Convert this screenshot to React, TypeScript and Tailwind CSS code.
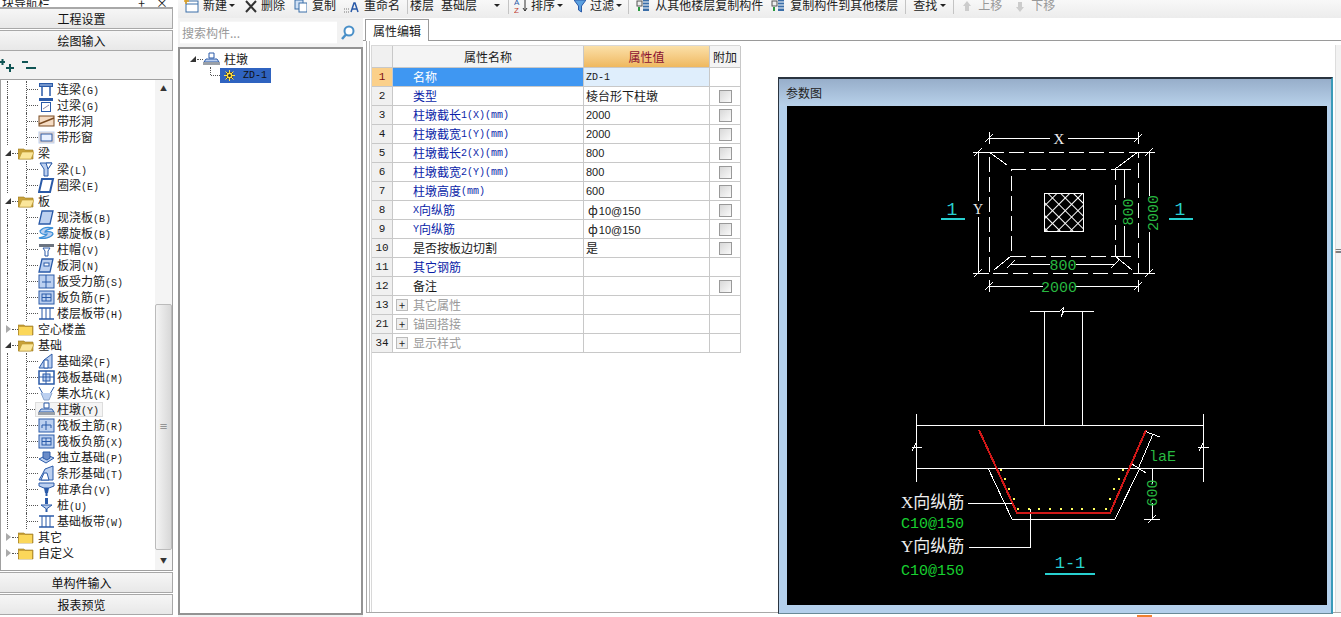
import React from "react";

const CJK = '"Noto Sans CJK SC", sans-serif';

// latin runs are narrower than a plain 12px font, like the bitmap font in the app
const Txt = ({ s }: { s: string }) => {
  const parts = s.split(/([\x20-\x7e]+)/).filter(Boolean);
  return (
    <>
      {parts.map((p, i) =>
        /^[\x20-\x7e]+$/.test(p) ? (
          <span key={i} className="font-['Liberation_Mono',monospace] text-[10px] whitespace-pre">{p}</span>
        ) : (
          <span key={i}>{p}</span>
        )
      )}
    </>
  );
};

const B = "#2a5aa8";
const L = "#bcd0f0";
const G = "#6c7480";

const icons: Record<string, React.ReactNode> = {
  lianliang: <><rect x="1" y="2" width="14" height="4" fill={B} /><path d="M4 6v9M12 6v9" stroke={B} strokeWidth="1.500" /><path d="M2 4h12" stroke={L} /></>,
  guoliang: <><rect x="1" y="1" width="14" height="3" fill={B} /><rect x="3.500" y="5.500" width="9" height="9" fill="#fff" stroke={B} /><path d="M5 12l6-4" stroke="#88a" /></>,
  dongdai: <><rect x="1" y="3" width="15" height="10" fill="#f5dcc4" stroke="#7a4a20" /><path d="M1 11L16 5" stroke="#7a4a20" strokeWidth="1.500" /></>,
  chuang: <><rect x="1" y="3" width="15" height="11" fill="#f1d9c6" stroke={L} /><rect x="3" y="5" width="11" height="7" fill="#e8f0ff" stroke={B} /></>,
  liang: <><path d="M2 2h12l-4 6v7H6V8z" fill={L} stroke={B} /><path d="M8 2l6 0-4 6z" fill="#fff" stroke={B} /></>,
  quan: <><path d="M4 2h11l-3 13H1z" fill="#fff" stroke={B} strokeWidth="2" /></>,
  ban: <><path d="M4 2h11l-3 13H1z" fill={L} stroke={B} strokeWidth="1.300" /></>,
  luoxuan: <><path d="M2 6c3-4 9-4 13-3-4 1-8 2-8 4 4-1 8 0 8 2-2 4-9 5-14 4 4-1 8-2 8-4-3 1-7 0-7-3z" fill={L} stroke="#3b8fd8" strokeWidth="1.300" /></>,
  zhumao: <><rect x="1" y="3" width="15" height="3" fill={G} /><path d="M5 7h7l-2 3v5H7v-5z" fill="#fff" stroke={B} /></>,
  bandong: <><path d="M4 2h11l-3 13H1z" fill={L} stroke={B} strokeWidth="1.300" /><rect x="6" y="6" width="5" height="3" fill="#fff" stroke={B} /></>,
  shouli: <><rect x="1" y="2" width="15" height="13" fill={L} stroke={B} /><path d="M8 2v13M4 9h9" stroke={B} /></>,
  fujin: <><rect x="1" y="2" width="15" height="13" fill={L} stroke={B} /><rect x="4" y="5" width="9" height="7" fill="none" stroke={B} /><path d="M8 5v7M4 8.500h9" stroke={B} /></>,
  daiban: <><path d="M1 3h15M1 14h15" stroke={B} strokeWidth="1.500" /><path d="M4 3v11M8 3v11M12 3v11" stroke={B} /></>,
  jichuliang: <><path d="M1 15l5-8 8-6v14z" fill={L} stroke={B} /><path d="M6 15V7h4v8z" fill="#fff" stroke={B} /></>,
  fa: <><rect x="1" y="2" width="15" height="13" fill="#fff" stroke={B} strokeWidth="1.500" /><rect x="5" y="5" width="7" height="7" fill={L} stroke={B} /><path d="M1 8h15M8 2v13" stroke={B} /></>,
  keng: <><path d="M1 2l4 7h7l4-7" fill="none" stroke={B} /><path d="M3 8l3 7h5l3-7" fill={L} stroke="#8aa4cc" /></>,
  zhudun: <><path d="M6 2h5v5H6z" fill="#fff" stroke={B} /><path d="M3 8h11l2 3H1z" fill={L} stroke={B} /><rect x="0" y="11" width="17" height="3" fill="#9aa0a8" /></>,
  zhujin: <><rect x="1" y="2" width="15" height="13" fill={L} stroke={B} /><path d="M8 4v9M4 8h9M4 8v3M13 8v3" stroke={B} /></>,
  duli: <><path d="M1 10l8-4 7 3-8 5z" fill={L} stroke={B} /><path d="M5 3h7v6l-3 2-4-2z" fill="#6a8cc8" stroke={B} /></>,
  tiao: <><path d="M1 15l4-7 2-4 8-3v14z" fill={L} stroke={B} /><path d="M3 15l3-7h3l2 7z" fill="#fff" stroke={B} /></>,
  chengtai: <><path d="M1 2h15v3l-5 2H6L1 5z" fill={L} stroke={B} /><path d="M6 7h5l-1 5H7z" fill={B} /><path d="M8.500 12v3" stroke={B} strokeWidth="2" /></>,
  zhuang: <><rect x="7" y="1" width="3" height="6" fill={B} /><path d="M3 8h11l-5.500 4z" fill={L} stroke={B} /><path d="M8.500 12v3" stroke={B} strokeWidth="2" /></>,
};

const Icon = ({ name }: { name: string }) => (
  <svg width="17" height="16" viewBox="0 0 17 16" className="shrink-0">{icons[name]}</svg>
);

const Folder = ({ open }: { open: boolean }) => (
  <svg width="16" height="14" viewBox="0 0 16 14" className="shrink-0">
    <path d="M0 3h6l1 1h8v9H0z" fill="#c9a23a" stroke="#9a7a20" strokeWidth="0.600" />
    {open ? <path d="M1 13l3-7h12l-3 7z" fill="#fbe69a" stroke="#b8962e" strokeWidth="0.600" /> : <rect x="1" y="5" width="13" height="8" fill="#fbd75a" />}
  </svg>
);

type Row = { t: string; icon?: string; open?: boolean; sel?: boolean };

const treeRows: Row[] = [
  { t: "连梁(G)", icon: "lianliang" },
  { t: "过梁(G)", icon: "guoliang" },
  { t: "带形洞", icon: "dongdai" },
  { t: "带形窗", icon: "chuang" },
  { t: "梁", open: true },
  { t: "梁(L)", icon: "liang" },
  { t: "圈梁(E)", icon: "quan" },
  { t: "板", open: true },
  { t: "现浇板(B)", icon: "ban" },
  { t: "螺旋板(B)", icon: "luoxuan" },
  { t: "柱帽(V)", icon: "zhumao" },
  { t: "板洞(N)", icon: "bandong" },
  { t: "板受力筋(S)", icon: "shouli" },
  { t: "板负筋(F)", icon: "fujin" },
  { t: "楼层板带(H)", icon: "daiban" },
  { t: "空心楼盖", open: false },
  { t: "基础", open: true },
  { t: "基础梁(F)", icon: "jichuliang" },
  { t: "筏板基础(M)", icon: "fa" },
  { t: "集水坑(K)", icon: "keng" },
  { t: "柱墩(Y)", icon: "zhudun", sel: true },
  { t: "筏板主筋(R)", icon: "zhujin" },
  { t: "筏板负筋(X)", icon: "fujin" },
  { t: "独立基础(P)", icon: "duli" },
  { t: "条形基础(T)", icon: "tiao" },
  { t: "桩承台(V)", icon: "chengtai" },
  { t: "桩(U)", icon: "zhuang" },
  { t: "基础板带(W)", icon: "daiban" },
  { t: "其它", open: false },
  { t: "自定义", open: false },
];

const NavButton = ({ label }: { label: string }) => (
  <div className="flex h-[21px] shrink-0 items-center justify-center border-y border-r border-[#a8a8a8] bg-gradient-to-b from-[#f6f6f6] to-[#e8e8e8] pr-[9px] text-[#111]">{label}</div>
);

const TreeRow = ({ r }: { r: Row }) => {
  if (r.icon) {
    return (
      <div className="flex h-4 items-center">
        <span className="ml-[6px] h-full border-l border-dotted border-[#555]" />
        <span className="ml-[18px] h-full border-l border-dotted border-[#555]" />
        {r.sel ? (
          <>
            <span className="w-[8px] border-t border-dotted border-[#555]" />
            <div className="flex h-[15px] w-[68px] items-center gap-[2px] border border-[#ddd] bg-[#f4f4f4] pl-[2px]">
              <Icon name={r.icon} />
              <span><Txt s={r.t} /></span>
            </div>
          </>
        ) : (
          <>
            <span className="w-[11px] border-t border-dotted border-[#555]" />
            <Icon name={r.icon} />
            <span className="ml-[2px]"><Txt s={r.t} /></span>
          </>
        )}
      </div>
    );
  }
  return (
    <div className="flex h-4 items-center">
      <span className={r.open ? "ml-[4px] h-0 w-0 border-b-[6px] border-l-[6px] border-b-[#333] border-l-transparent" : "ml-[5px] h-0 w-0 border-y-[4px] border-l-[5px] border-y-transparent border-l-[#aaa]"} />
      <span className="ml-[1px] w-[6px] border-t border-dotted border-[#555]" />
      <Folder open={!!r.open} />
      <span className="ml-[4px]">{r.t}</span>
    </div>
  );
};

const LeftPanel = () => (
  <div className="flex w-[173px] shrink-0 flex-col">
    <div className="flex h-[8px] shrink-0 items-end justify-between overflow-hidden border-b border-[#a8a8a8] px-[2px] leading-[14px]">
      <span className="-mb-[3px]">块导航栏</span>
      <span className="-mb-[3px] flex gap-[11px] pr-[3px]"><span>+</span><span>×</span></span>
    </div>
    <NavButton label="工程设置" />
    <div className="h-px" />
    <NavButton label="绘图输入" />
    <div className="flex h-[28px] shrink-0 items-center gap-[6px] bg-[#f2f2f2] pl-0">
      <svg width="14" height="14" viewBox="0 0 14 14"><path d="M0 4h5M2.500 1v6M6 10h8M10 6v8" stroke="#155" strokeWidth="2" /></svg>
      <svg width="14" height="14" viewBox="0 0 14 14" className="ml-[2px]"><path d="M0 4h6M4 10h10" stroke="#155" strokeWidth="2" /></svg>
    </div>
    <div className="flex h-[492px] shrink-0 overflow-hidden border border-[#a0a0a0] bg-white">
      <div className="min-w-0 flex-1 overflow-hidden pt-px">
        {treeRows.map((r) => (
          <TreeRow key={r.t} r={r} />
        ))}
      </div>
      <div className="flex w-[17px] shrink-0 flex-col bg-[#f4f4f4]">
        <div className="flex h-[17px] items-center justify-center text-[7px] text-[#333]">▲</div>
        <div className="flex-1" />
        <div className="flex h-[246px] items-center justify-center rounded-[2px] border border-[#bbb] bg-gradient-to-r from-[#f4f4f4] to-[#d8d8d8] text-[9px] text-[#555]">≡</div>
        <div className="flex h-[20px] items-center justify-center text-[7px] text-[#333]">▼</div>
      </div>
    </div>
    <div className="h-px" />
    <NavButton label="单构件输入" />
    <div className="h-px" />
    <NavButton label="报表预览" />
  </div>
);

const Sep = () => <span className="h-[18px] w-px shrink-0 bg-[#c4c4c4]" />;
const Caret = ({ cls }: { cls: string }) => (
  <span className={`h-0 w-0 shrink-0 border-x-[3px] border-t-[3px] border-x-transparent border-t-[#222] ${cls}`} />
);
const ToolIcon = ({ children, w = 14 }: { children: React.ReactNode; w?: number }) => (
  <svg width={w} height="16" viewBox={`0 0 ${w} 16`} className="shrink-0">{children}</svg>
);

const Toolbar = () => (
  <div className="h-[18px] shrink-0 overflow-hidden bg-gradient-to-b from-[#f8f8f8] to-[#ececec]">
    <div className="-mt-[3px] flex h-4 items-center whitespace-nowrap text-[#222]">
      <span className="ml-[5px]" />
      <ToolIcon w={16}><rect x="3" y="4" width="12" height="11" fill="#fff" stroke="#3a6ea8" /><path d="M3 7h12" stroke="#3a6ea8" /><path d="M3 2v5M1 4h5" stroke="#e0a020" strokeWidth="1.500" /></ToolIcon>
      <span className="ml-[4px]">新建</span>
      <Caret cls="ml-[2px]" />
      <span className="ml-[9px]" />
      <ToolIcon w={14}><path d="M2 4l10 11M12 4L2 15" stroke="#333" strokeWidth="2" /></ToolIcon>
      <span className="ml-[3px]">删除</span>
      <span className="ml-[9px]" />
      <ToolIcon w={13}><rect x="1" y="3" width="8" height="9" fill="#cfe0f5" stroke="#3a6ea8" /><rect x="5" y="6" width="8" height="9" fill="#fff" stroke="#3a6ea8" /></ToolIcon>
      <span className="ml-[5px]">复制</span>
      <span className="ml-[7px]" />
      <ToolIcon w={16}><path d="M8 15l3-9h1l3 9M9.500 12h4" stroke="#2a5aa8" fill="none" strokeWidth="1.500" /><path d="M1 12h5M1 15h5" stroke="#777" strokeDasharray="1 1" /></ToolIcon>
      <span className="ml-[5px]">重命名</span>
      <span className="ml-[7px]" />
      <Sep />
      <span className="ml-[2px]">楼层</span>
      <span className="ml-[7px]">基础层</span>
      <Caret cls="ml-[17px]" />
      <span className="ml-[8px]" />
      <Sep />
      <span className="ml-[5px]" />
      <ToolIcon w={15}><text x="0" y="8" fontSize="8" fill="#2a5aa8" fontFamily="Liberation Sans">A</text><text x="0" y="16" fontSize="8" fill="#c04030" fontFamily="Liberation Sans">Z</text><path d="M11 1v13M9 11l2 3 2-3" stroke="#333" fill="none" /></ToolIcon>
      <span className="ml-[2px]">排序</span>
      <Caret cls="ml-[2px]" />
      <span className="ml-[11px]" />
      <ToolIcon w={12}><path d="M0 3h12L7.500 9v6l-3-2V9z" fill="#5aa0e0" stroke="#2a5aa8" /></ToolIcon>
      <span className="ml-[4px]">过滤</span>
      <Caret cls="ml-[2px]" />
      <span className="ml-[6px]" />
      <Sep />
      <span className="ml-[7px]" />
      <ToolIcon w={14}><rect x="7" y="2" width="6" height="12" fill="#3a6ea8" /><path d="M7 5h6M7 8h6M7 11h6" stroke="#fff" /><rect x="1" y="4" width="5" height="5" fill="#eee" stroke="#555" /><path d="M3 10v4" stroke="#2a9a40" strokeWidth="2" /></ToolIcon>
      <span className="ml-[5px]">从其他楼层复制构件</span>
      <span className="ml-[8px]" />
      <ToolIcon w={14}><rect x="7" y="2" width="6" height="12" fill="#3a6ea8" /><path d="M7 5h6M7 8h6M7 11h6" stroke="#fff" /><rect x="1" y="4" width="5" height="5" fill="#eee" stroke="#555" /><path d="M3 10v4" stroke="#2a9a40" strokeWidth="2" /></ToolIcon>
      <span className="ml-[5px]">复制构件到其他楼层</span>
      <span className="ml-[7px]" />
      <Sep />
      <span className="ml-[7px]">查找</span>
      <Caret cls="ml-[3px]" />
      <span className="ml-[7px]" />
      <Sep />
      <span className="ml-[8px]" />
      <ToolIcon w={10}><path d="M5 4l4 5H7v5H3V9H1z" fill="#ccc" /></ToolIcon>
      <span className="ml-[6px] text-[#999]">上移</span>
      <span className="ml-[13px]" />
      <ToolIcon w={10}><path d="M5 15l4-5H7V5H3v5H1z" fill="#ccc" /></ToolIcon>
      <span className="ml-[6px] text-[#999]">下移</span>
    </div>
  </div>
);

const MiddlePanel = () => (
  <div className="flex w-[185px] shrink-0 flex-col bg-[#f2f2f2]">
    <div className="flex h-[29px] shrink-0 items-center pl-[2px]">
      <div className="flex h-[23px] w-[157px] items-center border-y border-[#f6f6f6] bg-white pl-[2px] text-[#999]">搜索构件...</div>
      <svg width="16" height="16" viewBox="0 0 16 16" className="ml-[3px]"><circle cx="9" cy="6" r="4.500" fill="#fff" stroke="#4a90c8" strokeWidth="2" /><path d="M6 9.500L2 14" stroke="#4a90c8" strokeWidth="2.500" /></svg>
    </div>
    <div className="h-[568px] border-x-2 border-t-2 border-b-2 border-[#939393] bg-white pt-[2px]">
      <div className="flex h-4 items-center">
        <span className="ml-[10px] h-0 w-0 border-b-[6px] border-l-[6px] border-b-[#333] border-l-transparent" />
        <span className="ml-[1px] w-[6px] border-t border-dotted border-[#555]" />
        <Icon name="zhudun" />
        <span className="ml-[4px]">柱墩</span>
      </div>
      <div className="flex h-4 items-center">
        <span className="ml-[30px] h-[8px] self-start border-l border-dotted border-[#555]" />
        <span className="w-[9px] border-t border-dotted border-[#555]" />
        <div className="flex h-[15px] w-[51px] items-center gap-[8px] bg-[#2f63c0] pl-[4px] text-white">
          <svg width="11" height="11" viewBox="0 0 11 11" className="shrink-0"><circle cx="5.500" cy="5.500" r="3.500" fill="#ffe040" stroke="#443" /><path d="M5.500 0v11M0 5.500h11M1.500 1.500l8 8M9.500 1.500l-8 8" stroke="#ffe040" /><circle cx="5.500" cy="5.500" r="1.500" fill="#333" /></svg>
          <span className="font-['Liberation_Mono',monospace] text-[10px] text-[#111]">ZD-1</span>
        </div>
      </div>
    </div>
  </div>
);

type Prop = { n: string; name: string; v?: string; blue?: boolean; check?: boolean; group?: boolean };

const props: Prop[] = [
  { n: "2", name: "类型", v: "棱台形下柱墩", blue: true, check: true },
  { n: "3", name: "柱墩截长1(X)(mm)", v: "2000", blue: true, check: true },
  { n: "4", name: "柱墩截宽1(Y)(mm)", v: "2000", blue: true, check: true },
  { n: "5", name: "柱墩截长2(X)(mm)", v: "800", blue: true, check: true },
  { n: "6", name: "柱墩截宽2(Y)(mm)", v: "800", blue: true, check: true },
  { n: "7", name: "柱墩高度(mm)", v: "600", blue: true, check: true },
  { n: "8", name: "X向纵筋", v: "ф10@150", blue: true, check: true },
  { n: "9", name: "Y向纵筋", v: "ф10@150", blue: true, check: true },
  { n: "10", name: "是否按板边切割", v: "是", check: true },
  { n: "11", name: "其它钢筋", blue: true },
  { n: "12", name: "备注", check: true },
  { n: "13", name: "其它属性", group: true },
  { n: "21", name: "锚固搭接", group: true },
  { n: "34", name: "显示样式", group: true },
];

const cell = "flex shrink-0 items-center border-r border-b border-[#c8c8c8]";

const PropValue = ({ v }: { v: string }) => {
  // numbers in this column sit in a plainer, larger face than the labels
  if (v.startsWith("ф")) {
    return (
      <span className="pl-[2px]">
        ф<span className="ml-[1px] font-['Liberation_Sans',sans-serif] text-[11px]">{v.slice(1)}</span>
      </span>
    );
  }
  if (/^\d+$/.test(v)) return <span className="font-['Liberation_Sans',sans-serif] text-[11px]">{v}</span>;
  return <span>{v}</span>;
};

const PropTable = () => (
  <div className="w-[369px] shrink-0 border-t border-l border-[#d8d8d8]">
    <div className="flex h-[22px]">
      <div className={`${cell} w-[21px] bg-[#f0f0f0]`} />
      <div className={`${cell} w-[191px] justify-center bg-[#f4f4f4]`}>属性名称</div>
      <div className={`${cell} w-[126px] justify-center bg-gradient-to-b from-[#fbe0a8] to-[#efb85e] text-[#8a1030]`}>属性值</div>
      <div className={`${cell} w-[31px] justify-center bg-[#f4f4f4]`}>附加</div>
    </div>
    <div className="flex h-[19px]">
      <div className={`${cell} w-[21px] justify-center bg-[#fbd08a] font-['Liberation_Mono',monospace] text-[11px] text-[#801010]`}>1</div>
      <div className={`${cell} w-[191px] bg-[#3f97f2] pl-[20px] text-white`}>名称</div>
      <div className={`${cell} w-[126px] bg-[#dfeefc] pl-[2px]`}><Txt s="ZD-1" /></div>
      <div className={`${cell} w-[31px]`} />
    </div>
    {props.map((p) => (
      <div key={p.n} className="flex h-[19px]">
        <div className={`${cell} w-[21px] justify-center bg-[#f0f0f0] font-['Liberation_Mono',monospace] text-[11px]`}>{p.n}</div>
        <div className={`${cell} w-[191px] ${p.group ? "pl-[3px] text-[#999]" : p.blue ? "pl-[20px] text-[#0a1ea8]" : "pl-[20px]"}`}>
          {p.group && (
            <span className="mr-[5px] flex h-[12px] w-[12px] items-center justify-center border border-[#bbb] bg-[#eee] text-[11px] leading-none text-[#222]">+</span>
          )}
          <Txt s={p.name} />
        </div>
        <div className={`${cell} w-[126px] pl-[2px]`}>{p.v && <PropValue v={p.v} />}</div>
        <div className={`${cell} w-[31px] justify-center`}>
          {p.check && <span className="h-[13px] w-[13px] border border-[#999] bg-gradient-to-br from-[#d8d8d8] to-[#fafafa]" />}
        </div>
      </div>
    ))}
  </div>
);

const dots: [number, number][] = [
  [363, 508], [376, 535], [388, 565], [403, 595], [415, 625], [448, 625], [478, 625], [511, 625], [544, 625],
  [577, 625], [607, 625], [643, 625], [679, 625], [691, 595], [703, 565], [718, 535], [730, 508],
];

const Tick = ({ x, y }: { x: number; y: number }) => <path d={`M${x - 4} ${y + 4}L${x + 4} ${y - 4}`} />;
const mono = "Liberation Mono, monospace";
const serif = "Liberation Serif, serif";

const Drawing = () => (
  <svg width="540" height="499" viewBox="787 105 540 499" shapeRendering="crispEdges" className="block bg-black">
    <defs>
      <pattern id="hatch" width="9" height="9" patternUnits="userSpaceOnUse" patternTransform="rotate(45 1044 192)">
        <path d="M0 0H9M0 0V9" stroke="#fff" strokeWidth="1.500" />
      </pattern>
    </defs>
    <g stroke="#fff" fill="none">
      <path d="M989 137H1050M1068 137H1138M989 131V143M1138 131V143" />
      <Tick x={989} y={137} /><Tick x={1138} y={137} />
      <rect x="989" y="151" width="149" height="121" strokeDasharray="15 5" />
      <rect x="1011" y="168" width="104" height="87" strokeDasharray="15 5" />
      <path d="M989 151L1007 164M1138 151L1115 168M994 269L1011 255M1115 255L1132 269" />
      <rect x="1044" y="192" width="39" height="38" fill="url(#hatch)" />
      <path d="M978 151V200M978 216V272M973 151H989M973 272H989" />
      <Tick x={978} y={151} /><Tick x={978} y={272} />
      <path d="M1124 168V197M1124 225V255M1115 168H1131M1115 255H1131" />
      <path d="M1149 151V195M1149 231V272M1138 151H1155M1138 272H1155" />
      <Tick x={1149} y={151} /><Tick x={1149} y={272} />
      <path d="M1011 263H1050M1076 263H1115" />
      <Tick x={1011} y={263} /><Tick x={1115} y={263} />
      <path d="M989 285H1043M1075 285H1138M989 279V291M1138 279V291" />
      <Tick x={989} y={285} /><Tick x={1138} y={285} />

      <path d="M1030 310H1060L1064 306L1061 316L1064 310H1094M1044 310V424M1082 310V424" />
      <path d="M916 424H1203M916 467H1203M916 413V481M1203 413V481" />
      <path d="M912 446H922M1198 446H1209M916 442L912 450M1203 442L1199 450" />
      <path d="M988 467L1012 518H1115L1140 467" />
      <path d="M968 502H1013M969 546H1030V508" />
      <path d="M1153 433L1138 468M1144 430L1160 436M1132 463L1146 472" />
      <path d="M1152 467V483M1152 502V518M1144 518H1160M1148 522L1156 514" />
    </g>
    <path d="M979 429L1017 512H1110L1146 429" stroke="#d01818" strokeWidth="2" fill="none" />
    <g fill="#ffff60">
      {dots.map(([x, y]) => (
        <rect key={`${x}-${y}`} x={880 + x / 3 - 1} y={300 + y / 3 - 1} width="2" height="2" />
      ))}
    </g>
    <path d="M941 218H965M1169 218H1193M1045 573H1095" stroke="#28d0d0" strokeWidth="2" />
    <g shapeRendering="auto">
      <text x="1059" y="143" fontSize="15" fill="#eee" textAnchor="middle" fontFamily={serif}>X</text>
      <text x="978" y="213" fontSize="14" fill="#eee" textAnchor="middle" fontFamily={serif}>Y</text>
      <text x="952" y="214" fontSize="18" fill="#28d0d0" textAnchor="middle" fontFamily={mono}>1</text>
      <text x="1180" y="214" fontSize="18" fill="#28d0d0" textAnchor="middle" fontFamily={mono}>1</text>
      <text x="1063" y="269" fontSize="15" fill="#28b840" textAnchor="middle" fontFamily={mono}>800</text>
      <text x="1059" y="291" fontSize="15" fill="#28b840" textAnchor="middle" fontFamily={mono}>2000</text>
      <text transform="rotate(-90 1133 211)" x="1133" y="211" fontSize="15" fill="#28b840" textAnchor="middle" fontFamily={mono}>800</text>
      <text transform="rotate(-90 1158 212)" x="1158" y="212" fontSize="15" fill="#28b840" textAnchor="middle" fontFamily={mono}>2000</text>
      <text x="1149" y="460" fontSize="15" fill="#28b840" fontFamily={mono}>laE</text>
      <text transform="rotate(-90 1157 492)" x="1157" y="492" fontSize="15" fill="#28b840" textAnchor="middle" fontFamily={mono}>600</text>
      <text x="901" y="507" fontSize="17" fill="#eee" fontFamily={`Liberation Serif, ${CJK}`}>X向纵筋</text>
      <text x="901" y="527" fontSize="15" fill="#18d030" fontFamily={mono}>C10@150</text>
      <text x="901" y="551" fontSize="17" fill="#eee" fontFamily={`Liberation Serif, ${CJK}`}>Y向纵筋</text>
      <text x="901" y="574" fontSize="15" fill="#18d030" fontFamily={mono}>C10@150</text>
      <text x="1070" y="567" fontSize="17" fill="#28d0d0" textAnchor="middle" fontFamily={mono}>1-1</text>
    </g>
  </svg>
);

const ParamWindow = () => (
  <div className="mt-[32px] ml-[38px] h-[537px] w-[555px] shrink-0 border-t-2 border-r-2 border-b border-l border-t-[#2a3440] border-r-[#3a9ab8] border-b-[#6a8a98] border-l-[#2a3440] bg-[#b4d0ec]">
    <div className="flex h-[27px] items-center bg-gradient-to-b from-[#97aeca] to-[#b8d1ea] pl-[7px] text-[#222]">参数图</div>
    <div className="pl-[8px]">
      <Drawing />
    </div>
  </div>
);

const RightPanel = () => (
  <div className="flex min-w-0 flex-1 flex-col">
    <div className="h-px shrink-0" />
    <div className="flex h-[22px] shrink-0 items-end border-b border-[#9a9a9a] pl-[2px]">
      <div className="-mb-px flex h-[22px] w-[64px] items-center justify-center border-x border-t border-[#9a9a9a] bg-white">属性编辑</div>
    </div>
    <div className="ml-[3px] flex h-[572px] border-b border-l border-[#a8a8a8]">
      <div className="ml-[2px] flex min-w-0 flex-1 border-l border-[#c0c0c0] pt-[4px] pl-[1px]">
        <PropTable />
        <ParamWindow />
        <div className="ml-[2px] flex w-[6px] shrink-0 flex-col items-center border-l border-[#ddd] bg-[#f2f2f2] pt-[200px] text-[8px]">≡</div>
      </div>
    </div>
  </div>
);

export default function App() {
  return (
    <div className="relative flex h-[617px] w-[1341px] overflow-hidden bg-white font-['Noto_Sans_CJK_SC',sans-serif] text-[12px] text-[#1a1a1a]">
      <LeftPanel />
      <div className="ml-[5px] flex min-w-0 flex-1 flex-col">
        <Toolbar />
        <div className="flex min-h-0 flex-1">
          <MiddlePanel />
          <RightPanel />
        </div>
      </div>
      <span className="absolute bottom-0 left-[1137px] h-[2px] w-[15px] bg-[#f08030]" />
    </div>
  );
}
